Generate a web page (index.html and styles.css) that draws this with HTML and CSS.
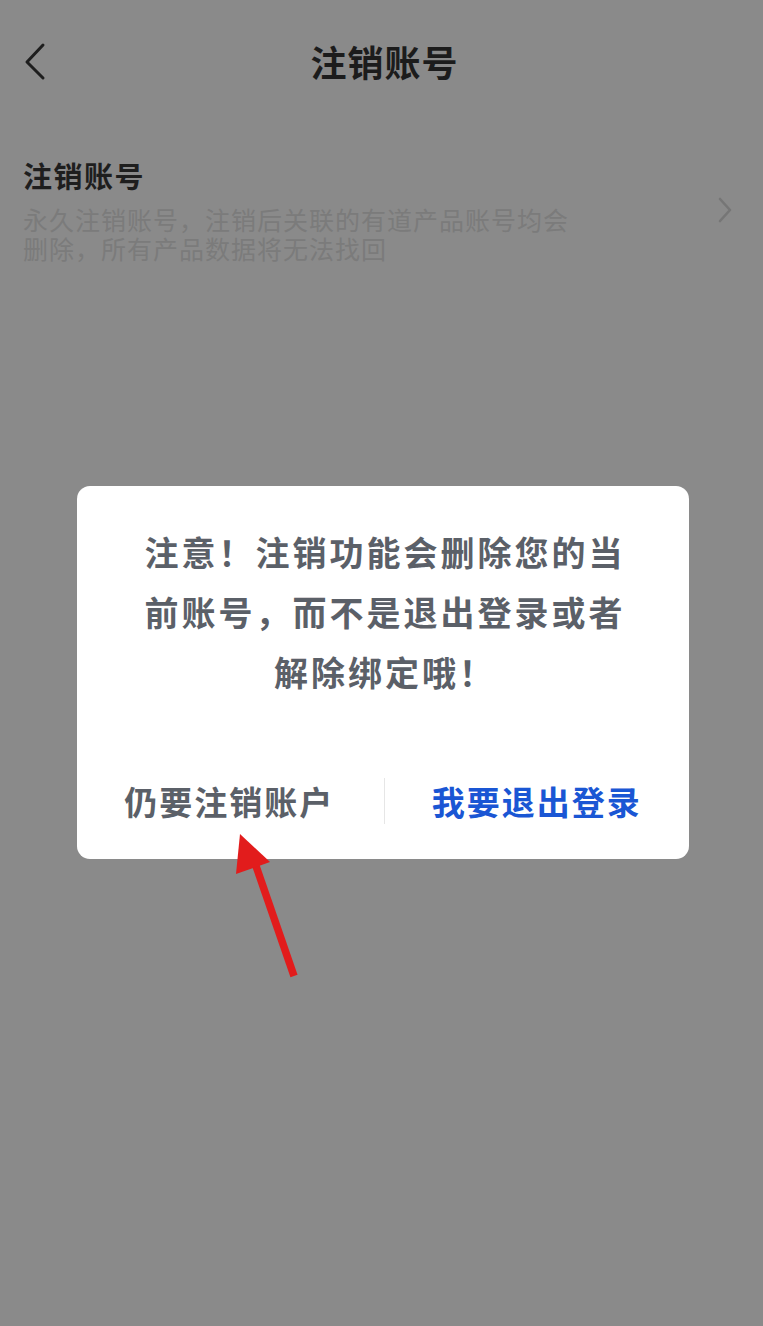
FILE: index.html
```html
<!DOCTYPE html>
<html lang="zh-CN">
<head>
<meta charset="utf-8">
<title>注销账号</title>
<link rel="stylesheet" href="styles.css">
</head>
<body>
<div class="page">
  <header class="topbar">
    <svg class="back" width="30" height="40" viewBox="0 0 30 40"><polyline points="19,4 3,21 19,37" fill="none" stroke="#1e1e1e" stroke-width="3" stroke-linecap="round" stroke-linejoin="round"/></svg>
    <h1 class="title">注销账号</h1>
  </header>
  <div class="row">
    <div class="row-text">
      <div class="row-title">注销账号</div>
      <div class="row-sub">永久注销账号，注销后关联的有道产品账号均会删除，所有产品数据将无法找回</div>
    </div>
    <svg class="chev" width="16" height="26" viewBox="0 0 16 26"><polyline points="3,2 13,13 3,24" fill="none" stroke="#767676" stroke-width="2.6" stroke-linecap="round" stroke-linejoin="round"/></svg>
  </div>
</div>
<div class="overlay">
  <div class="dialog">
    <p class="msg">注意！注销功能会删除您的当前账号，而不是退出登录或者解除绑定哦！</p>
    <div class="actions">
      <div class="btn btn-gray">仍要注销账户</div>
      <div class="divider"></div>
      <div class="btn btn-blue">我要退出登录</div>
    </div>
  </div>
</div>
<svg class="arrow" width="763" height="1326" viewBox="0 0 763 1326">
  <line x1="294" y1="976" x2="256" y2="866" stroke="#e21c1c" stroke-width="7.5"/>
  <polygon points="240,834 236,874 270,862" fill="#e21c1c"/>
</svg>
</body>
</html>
```
FILE: styles.css
```css
html, body {
  margin: 0;
  padding: 0;
}
body {
  width: 763px;
  height: 1326px;
  background: #8a8a8a;
  font-family: "Noto Sans CJK SC", "Noto Sans", sans-serif;
  position: relative;
  overflow: hidden;
}
.page {
  display: flex;
  flex-direction: column;
}
.topbar {
  height: 126px;
  display: flex;
  align-items: center;
  justify-content: center;
  position: relative;
  padding-left: 6px;
}
.back {
  position: absolute;
  left: 24px;
  top: 41px;
}
.title {
  margin: 0 0 4px 0;
  font-size: 36px;
  font-weight: 700;
  letter-spacing: 1px;
  color: #1c1c1c;
  line-height: 1;
}
.row {
  display: flex;
  align-items: center;
  justify-content: space-between;
  padding: 29px 30px 0 23px;
}
.row-text {
  width: 570px;
}
.row-title {
  font-size: 29px;
  font-weight: 700;
  letter-spacing: 1.5px;
  color: #1e1e1e;
  line-height: 40px;
}
.row-sub {
  margin-top: 10px;
  font-size: 25px;
  letter-spacing: 1px;
  color: #7b7b7b;
  line-height: 29px;
}
.chev {
  margin-top: 2px;
}
.overlay {
  position: absolute;
  inset: 0;
  display: flex;
  justify-content: center;
  align-items: flex-start;
  padding-top: 486px;
  padding-left: 3px;
}
.dialog {
  width: 612px;
  height: 373px;
  background: #ffffff;
  border-radius: 13px;
  display: flex;
  flex-direction: column;
}
.msg {
  margin: 0;
  padding: 36px 58px 0 62px;
  font-size: 34px;
  font-weight: 700;
  letter-spacing: 3px;
  line-height: 60px;
  text-align: center;
  color: #5b6068;
}
.actions {
  margin-top: auto;
  height: 112px;
  display: flex;
  align-items: center;
}
.btn {
  flex: 1;
  text-align: center;
  font-size: 33px;
  font-weight: 700;
  letter-spacing: 2px;
  line-height: 40px;
  margin-top: -4px;
}
.btn-gray {
  color: #5b6068;
  padding-right: 2px;
}
.btn-blue {
  color: #1a56d4;
}
.divider {
  width: 1px;
  height: 46px;
  background: #e6e6e6;
  margin-top: -4px;
}
.arrow {
  position: absolute;
  left: 0;
  top: 0;
}
```
